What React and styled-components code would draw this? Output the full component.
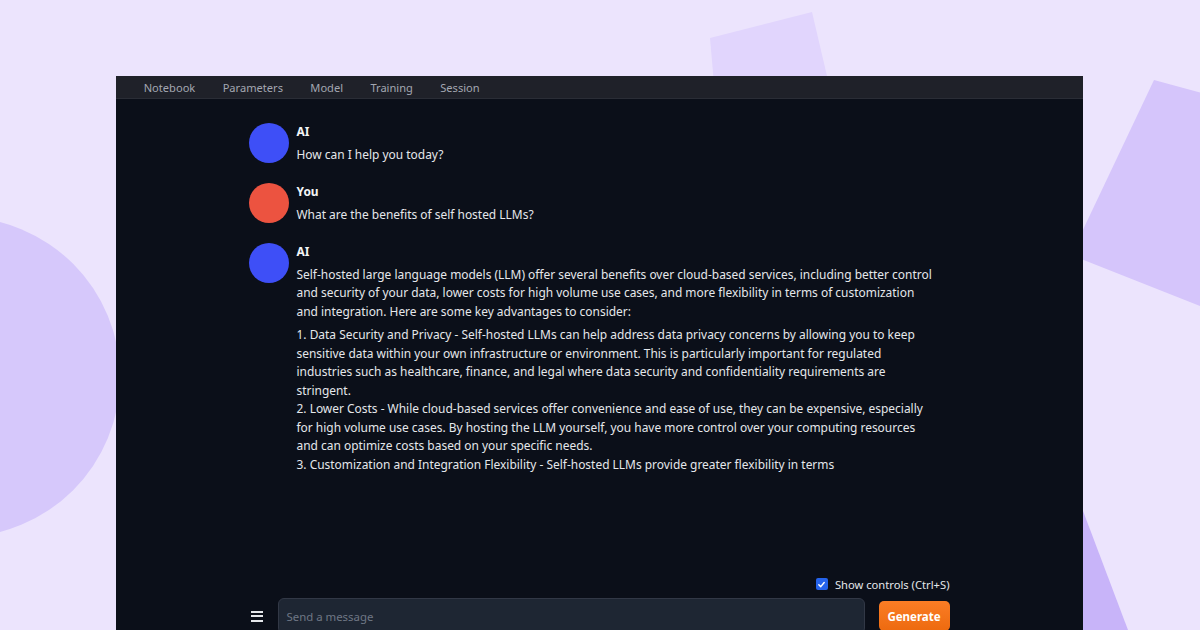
import React from 'react';
import styled, { createGlobalStyle } from 'styled-components';

const GlobalStyle = createGlobalStyle`
  html, body {
    margin: 0;
    padding: 0;
    background: #ece4fd;
    font-family: "Noto Sans", "DejaVu Sans", sans-serif;
  }
`;

const Page = styled.div`
  position: relative;
  width: 1200px;
  height: 630px;
  overflow: hidden;
  background: #ece4fd;
  padding: 76px 0 0 116px;
  box-sizing: border-box;
`;

const Backdrop = styled.svg`
  position: absolute;
  top: 0;
  left: 0;
  z-index: 0;
`;

const Window = styled.div`
  position: relative;
  z-index: 1;
  width: 967px;
  height: 558px;
  display: flex;
  flex-direction: column;
  background: #0b0f19;
  color: #e5e7eb;
`;

const NavBar = styled.nav`
  height: 23px;
  display: flex;
  align-items: center;
  padding: 1px 0 0 14px;
  background: #1f2129;
  border-bottom: 1px solid #2a2d36;
  box-sizing: border-box;
`;

const NavTab = styled.span`
  padding: 0 13.7px;
  font-size: 11.1px;
  color: #a3a7b1;
`;

const Body = styled.main`
  flex: 1;
  width: 702px;
  margin: 0 auto;
  display: flex;
  flex-direction: column;
`;

const Chat = styled.section`
  flex: 1;
  display: flex;
  flex-direction: column;
  gap: 19px;
  padding-top: 24px;
`;

const Row = styled.div`
  display: flex;
  gap: 8px;
`;

const Avatar = styled.div`
  flex: none;
  width: 40px;
  height: 40px;
  border-radius: 50%;
  background: ${p => (p.$user ? '#ec5340' : '#3e4ff7')};
`;

const Bubble = styled.div`
  width: 640px;
  font-size: 11.95px;
  line-height: 18.5px;
`;

const Name = styled.div`
  font-weight: 700;
  color: #f3f4f6;
  margin-bottom: 4px;
`;

const Para = styled.p`
  margin: 0;
  color: #e5e7eb;
  & + & {
    margin-top: 5px;
  }
`;

const Controls = styled.div`
  display: flex;
  justify-content: flex-end;
  align-items: center;
  gap: 7px;
  height: 18px;
  margin-bottom: 5px;
  padding-right: 1px;
  font-size: 11.2px;
  color: #e5e7eb;
`;

const Check = styled.span`
  width: 12px;
  height: 12px;
  border-radius: 2px;
  background: #2563eb;
  display: flex;
  align-items: center;
  justify-content: center;
`;

const InputRow = styled.div`
  display: flex;
  align-items: center;
  height: 36px;
`;

const Menu = styled.span`
  width: 29px;
  display: flex;
  flex-direction: column;
  gap: 2.5px;
  padding-left: 2px;
  box-sizing: border-box;
  & > i {
    display: block;
    width: 12px;
    height: 2px;
    background: #e5e7eb;
  }
`;

const Input = styled.div`
  flex: 1;
  height: 36px;
  box-sizing: border-box;
  border: 1px solid #323846;
  border-radius: 6px;
  background: #1e2633;
  padding: 0 8px;
  display: flex;
  align-items: center;
  font-size: 11.4px;
  color: #6f7785;
`;

const Generate = styled.button`
  margin-left: 14px;
  margin-right: 1px;
  width: 71px;
  height: 30px;
  padding: 0;
  border: none;
  border-radius: 5px;
  background: linear-gradient(#fb7d25, #ed6a0f);
  color: #fff;
  font-family: inherit;
  font-weight: 700;
  font-size: 11.5px;
`;

const tabs = ['Notebook', 'Parameters', 'Model', 'Training', 'Session'];

export default function App() {
  return (
    <Page>
      <GlobalStyle />
      <Backdrop width="1200" height="630" viewBox="0 0 1200 630">
        <polygon points="710,38 812,12 835,110 718,130" fill="#e1d5fd" />
        <circle cx="-40" cy="377" r="160" fill="#d6c8fb" />
        <polygon points="1154,80 1071,255 1230,318 1300,120" fill="#d5c5fb" />
        <polygon points="1060,450 1128,630 1040,630" fill="#c8b4f9" />
      </Backdrop>
      <Window>
        <NavBar>
          {tabs.map(t => (
            <NavTab key={t}>{t}</NavTab>
          ))}
        </NavBar>
        <Body>
          <Chat>
            <Row>
              <Avatar />
              <Bubble>
                <Name>AI</Name>
                <Para>How can I help you today?</Para>
              </Bubble>
            </Row>
            <Row>
              <Avatar $user />
              <Bubble>
                <Name>You</Name>
                <Para>What are the benefits of self hosted LLMs?</Para>
              </Bubble>
            </Row>
            <Row>
              <Avatar />
              <Bubble>
                <Name>AI</Name>
                <Para>
                  Self-hosted large language models (LLM) offer several benefits over cloud-based services, including better control and security of your data, lower costs for high volume use cases, and more flexibility in terms of customization and integration. Here are some key advantages to consider:
                </Para>
                <Para>
                  1. Data Security and Privacy - Self-hosted LLMs can help address data privacy concerns by allowing you to keep sensitive data within your own infrastructure or environment. This is particularly important for regulated industries such as healthcare, finance, and legal where data security and confidentiality requirements are stringent.
                  <br />
                  2. Lower Costs - While cloud-based services offer convenience and ease of use, they can be expensive, especially for high volume use cases. By hosting the LLM yourself, you have more control over your computing resources and can optimize costs based on your specific needs.
                  <br />
                  3. Customization and Integration Flexibility - Self-hosted LLMs provide greater flexibility in terms
                </Para>
              </Bubble>
            </Row>
          </Chat>
          <Controls>
            <Check>
              <svg width="9" height="9" viewBox="0 0 10 10">
                <path d="M2 5.2 L4.2 7.4 L8 2.8" stroke="#fff" strokeWidth="1.6" fill="none" strokeLinecap="round" strokeLinejoin="round" />
              </svg>
            </Check>
            Show controls (Ctrl+S)
          </Controls>
          <InputRow>
            <Menu>
              <i />
              <i />
              <i />
            </Menu>
            <Input>Send a message</Input>
            <Generate>Generate</Generate>
          </InputRow>
        </Body>
      </Window>
    </Page>
  );
}
